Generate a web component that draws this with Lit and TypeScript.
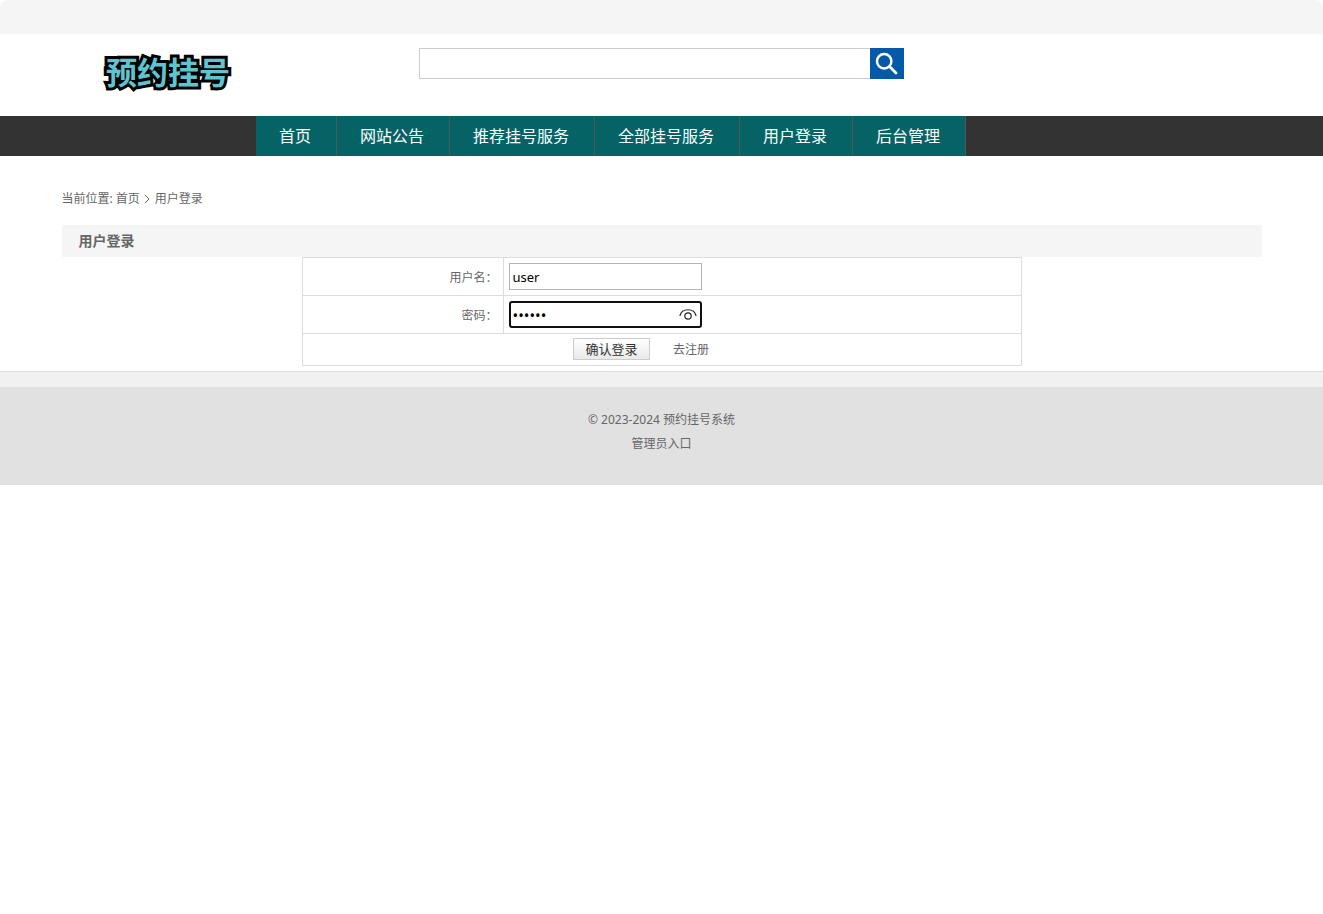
import { LitElement, html, css } from "lit";
import { customElement, state } from "lit/decorators.js";

@customElement("app-root")
export class AppRoot extends LitElement {
  static styles = css`
    :host {
      display: block;
      min-height: 100vh;
      background: #fff;
      color: #666;
      font: 12px/24px "Noto Sans", "Noto Sans CJK SC", sans-serif;
    }
    * {
      box-sizing: border-box;
    }
    a {
      color: inherit;
      text-decoration: none;
    }
    .topbar {
      height: 34px;
      background: #f5f5f5;
      border-radius: 8px 8px 0 0;
    }
    .wrap {
      width: 100%;
      max-width: 1200px;
      margin: 0 auto;
    }
    .header {
      display: grid;
      grid-template-columns: 1fr auto 1fr;
      align-items: start;
      height: 82px;
      padding-top: 14px;
    }
    .logo {
      display: block;
      justify-self: start;
      margin-left: 40px;
    }
    .logo svg {
      display: block;
    }
    .logo text {
      font: 700 31px "Noto Sans CJK SC", sans-serif;
      fill: #5fc4cf;
      stroke: #000;
      stroke-width: 6px;
      stroke-linejoin: miter;
      stroke-miterlimit: 2;
      paint-order: stroke;
    }
    .search {
      display: flex;
    }
    .search-box {
      width: 451px;
      height: 31px;
      padding: 0 8px;
      border: 1px solid #ccc;
      border-right: 0;
      border-radius: 0;
      outline: none;
      font: inherit;
    }
    .search-button {
      display: grid;
      place-items: center;
      width: 34px;
      height: 31px;
      padding: 0;
      border: 0;
      background: #0459a9;
      cursor: pointer;
    }
    .nav {
      background: #333;
    }
    .nav-list {
      display: flex;
      max-width: 811px;
      margin: 0 auto;
      padding: 0;
      list-style: none;
    }
    .nav-link {
      display: block;
      padding: 0 25px 0 23px;
      border-right: 1px solid #4f5757;
      background: #056365;
      color: #fff;
      font-size: 16px;
      line-height: 40px;
      white-space: nowrap;
    }
    .crumbs {
      display: flex;
      align-items: center;
      padding: 31px 0 14px;
    }
    .crumb-label {
      margin-right: 3px;
    }
    .chevron {
      margin: 0 5px 0 4px;
    }
    .title {
      margin: 0;
      padding: 0 17px;
      background: #f5f5f5;
      font-size: 14px;
      font-weight: 700;
      line-height: 32px;
    }
    .form-table {
      width: 60%;
      margin: 0 auto 5px;
      border-collapse: collapse;
    }
    .form-table th,
    .form-table td {
      height: 38px;
      padding: 0 5px;
      border: 1px solid #ddd;
      font-weight: 400;
      text-align: left;
    }
    .form-table .label-cell {
      width: 201px;
      padding-top: 2px;
      text-align: right;
    }
    .form-table .action-cell {
      height: 32px;
    }
    .field {
      display: block;
      width: 193px;
      height: 27px;
      padding: 1px 3px;
      border: 1px solid #b5b5b5;
      border-radius: 0;
      outline: none;
      background: #fff;
      color: #000;
      font: 13px "Noto Sans", "Noto Sans CJK SC", sans-serif;
    }
    .password {
      display: flex;
      align-items: center;
      width: 193px;
      height: 27px;
      padding: 0 3px 0 2px;
      border: 2px solid #101010;
      border-radius: 3px;
    }
    .password-field {
      flex: 1;
      min-width: 0;
      height: 22px;
      padding: 0;
      border: 0;
      outline: none;
      background: none;
      color: #000;
      font: 15px "Noto Sans", sans-serif;
    }
    .reveal {
      display: block;
      width: 18px;
      height: 16px;
      padding: 0;
      border: 0;
      background: none;
      cursor: pointer;
    }
    .reveal svg {
      display: block;
    }
    .actions {
      display: flex;
      justify-content: center;
      align-items: baseline;
      gap: 23px;
      padding-right: 41px;
    }
    .submit {
      width: 77px;
      height: 22px;
      padding: 0;
      border: 1px solid #ccc;
      background: linear-gradient(#fff, #e9e9e9);
      color: #333;
      font: 13px/18px "Noto Sans", "Noto Sans CJK SC", sans-serif;
      cursor: pointer;
    }
    .footer {
      border-top: 1px solid #ddd;
      background: #e1e1e1;
      text-align: center;
    }
    .footer-strip {
      height: 15px;
      background: #f1f1f1;
    }
    .footer-text {
      padding: 21px 0 29px;
    }
    .footer-text p {
      margin: 0;
    }
  `;

  @state() private revealed = false;

  private links = ["首页", "网站公告", "推荐挂号服务", "全部挂号服务", "用户登录", "后台管理"];

  render() {
    return html`
      <div class="topbar"></div>
      <header class="wrap header">
        <a class="logo" href="#">
          <svg width="132" height="48" viewBox="0 0 132 48">
            <text x="4" y="36">预约挂号</text>
          </svg>
        </a>
        <form class="search" role="search" @submit=${(e: Event) => e.preventDefault()}>
          <input class="search-box" type="text" aria-label="搜索" />
          <button class="search-button" type="submit" aria-label="搜索">
            <svg width="24" height="24" viewBox="0 0 24 24" fill="none" stroke="#fff">
              <circle cx="9.2" cy="9.2" r="7.2" stroke-width="2.5" />
              <path d="M14.5 14.5 L21 21" stroke-width="2.8" stroke-linecap="round" />
            </svg>
          </button>
        </form>
      </header>
      <nav class="nav">
        <ul class="nav-list">
          ${this.links.map((l) => html`<li><a class="nav-link" href="#">${l}</a></li>`)}
        </ul>
      </nav>
      <main class="wrap">
        <div class="crumbs">
          <span class="crumb-label">当前位置:</span>
          <a href="#">首页</a>
          <svg class="chevron" width="6" height="10" viewBox="0 0 6 10" fill="none" stroke="#666">
            <path d="M1 1 L5 5 L1 9" />
          </svg>
          <span>用户登录</span>
        </div>
        <h1 class="title">用户登录</h1>
        <form @submit=${(e: Event) => e.preventDefault()}>
          <table class="form-table">
            <tbody>
              <tr>
                <th class="label-cell" scope="row"><label for="user">用户名：</label></th>
                <td><input class="field" id="user" type="text" value="user" /></td>
              </tr>
              <tr>
                <th class="label-cell" scope="row"><label for="pass">密码：</label></th>
                <td>
                  <div class="password">
                    <input
                      class="password-field"
                      id="pass"
                      type=${this.revealed ? "text" : "password"}
                      value="123456"
                    />
                    <button
                      class="reveal"
                      type="button"
                      aria-label="显示密码"
                      @click=${() => (this.revealed = !this.revealed)}
                    >
                      <svg width="18" height="16" viewBox="0 0 18 16" fill="none" stroke="#222" stroke-width="1.2">
                        <path d="M1 8.5 C3 0.8 15 0.8 17 8.5" stroke-linecap="round" />
                        <circle cx="9" cy="9" r="3.2" />
                      </svg>
                    </button>
                  </div>
                </td>
              </tr>
              <tr>
                <td class="action-cell" colspan="2">
                  <div class="actions">
                    <button class="submit" type="submit">确认登录</button>
                    <a href="#">去注册</a>
                  </div>
                </td>
              </tr>
            </tbody>
          </table>
        </form>
      </main>
      <footer class="footer">
        <div class="footer-strip"></div>
        <div class="footer-text">
          <p>© 2023-2024 预约挂号系统</p>
          <p><a href="#">管理员入口</a></p>
        </div>
      </footer>
    `;
  }
}
